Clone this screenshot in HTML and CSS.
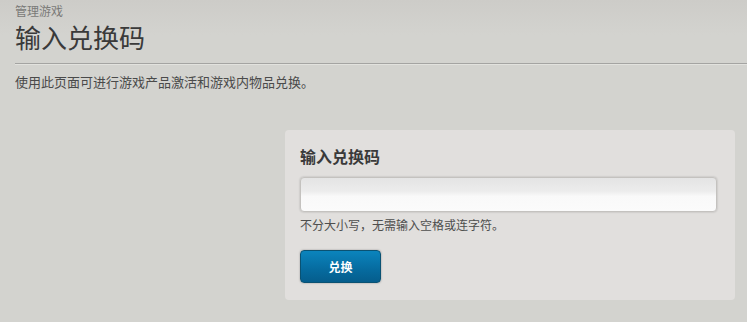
FILE: index.html
```html
<!DOCTYPE html>
<html>
<head>
    <title>输入兑换码</title>
    <link rel="stylesheet" href="styles.css">
</head>
<body>
    <div class="page-header">
        <div class="breadcrumb">管理游戏</div>
        <h1 class="page-title">输入兑换码</h1>
    </div>
    <p class="intro">使用此页面可进行游戏产品激活和游戏内物品兑换。</p>

    <!-- Redeem code panel -->
    <form class="redeem-panel" action="#" method="POST">
        <h2 class="panel-title">输入兑换码</h2>
        <input type="text" class="code-input" name="code">
        <p class="hint">不分大小写，无需输入空格或连字符。</p>
        <button type="submit" class="redeem-button">兑换</button>
    </form>
</body>
</html>
```

FILE: styles.css
```css
html {
    background-color: #d3d3cf;
}

body {
    font-family: "Noto Sans CJK SC", "Noto Sans", sans-serif;
    background: linear-gradient(#cdccc8, #d3d3cf 35px) no-repeat;
    color: #333;
    margin: 0;
    padding: 0;
}

.page-header {
    padding: 3px 0 0 15px;
}

.breadcrumb {
    font-size: 12px;
    line-height: 16px;
    color: #7a7a78;
}

.page-title {
    margin: 0;
    padding-top: 1px;
    font-size: 26px;
    line-height: 34px;
    font-weight: normal;
    color: #3a3a3a;
    padding-bottom: 9px;
    border-bottom: 1px solid #a4a4a2;
    box-shadow: 0 1px 0 #e2e2de;
}

.intro {
    margin: 9px 0 0 15px;
    font-size: 13px;
    line-height: 18px;
    color: #4a4a4a;
}

.redeem-panel {
    width: 450px;
    box-sizing: border-box;
    margin: 39px 0 0 285px;
    padding: 14px 18px 17px 15px;
    background-color: #e1dfdd;
    border-radius: 4px;
}

.panel-title {
    margin: 0;
    font-size: 16px;
    line-height: 24px;
    font-weight: bold;
    color: #3a3a3a;
}

.code-input {
    display: block;
    width: 417px;
    height: 35px;
    box-sizing: border-box;
    margin-top: 9px;
    border: 1px solid #c4c2bf;
    border-radius: 4px;
    background: linear-gradient(#e4e4e4, #ececec 40%, #f9f9f9 55%, #fbfbfb);
    box-shadow: 0 0 2px rgba(0, 0, 0, 0.25);
}

.hint {
    margin: 5px 0 0 0;
    font-size: 12px;
    line-height: 16px;
    color: #4e4e4e;
}

.redeem-button {
    display: block;
    margin-top: 17px;
    width: 81px;
    height: 33px;
    font-family: inherit;
    font-size: 12px;
    font-weight: bold;
    color: #fff;
    background: linear-gradient(#0b84bd, #066b9f 60%, #055d8c);
    border: 1px solid #0a5273;
    border-radius: 4px;
    box-shadow: 0 0 2px rgba(0, 0, 0, 0.35);
    cursor: pointer;
}

.redeem-button:hover {
    background: linear-gradient(#1292cc, #0776ad);
}
```
